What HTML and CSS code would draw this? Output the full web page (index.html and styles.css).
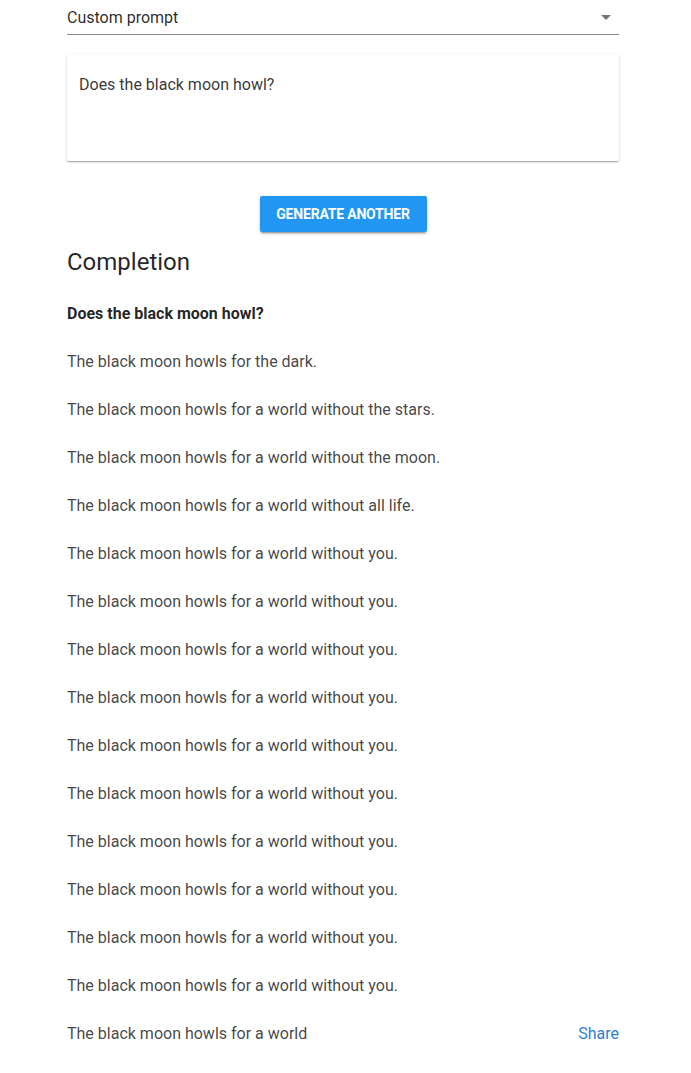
FILE: index.html
```html
<!DOCTYPE html>
<html>
<head>
<meta charset="utf-8">
<link rel="stylesheet" href="styles.css">
</head>
<body>
<div class="page">
  <div class="select">
    <span class="select-text">Custom prompt</span>
    <svg class="arrow" width="10" height="5" viewBox="0 0 10 5"><path d="M0 0 L10 0 L5 5 Z" fill="#757575"/></svg>
  </div>
  <div class="card">
    <div class="card-text">Does the black moon howl?</div>
  </div>
  <div class="btn-row">
    <button class="btn">Generate another</button>
  </div>
  <h2 class="title">Completion</h2>
  <div class="completion">
    <p class="line bold">Does the black moon howl?</p>
    <p class="line">The black moon howls for the dark.</p>
    <p class="line">The black moon howls for a world without the stars.</p>
    <p class="line">The black moon howls for a world without the moon.</p>
    <p class="line">The black moon howls for a world without all life.</p>
    <p class="line">The black moon howls for a world without you.</p>
    <p class="line">The black moon howls for a world without you.</p>
    <p class="line">The black moon howls for a world without you.</p>
    <p class="line">The black moon howls for a world without you.</p>
    <p class="line">The black moon howls for a world without you.</p>
    <p class="line">The black moon howls for a world without you.</p>
    <p class="line">The black moon howls for a world without you.</p>
    <p class="line">The black moon howls for a world without you.</p>
    <p class="line">The black moon howls for a world without you.</p>
    <p class="line">The black moon howls for a world without you.</p>
    <div class="last-row">
      <p class="line">The black moon howls for a world</p>
      <a class="share" href="#">Share</a>
    </div>
  </div>
</div>
</body>
</html>
```
FILE: styles.css
```css
html, body {
  margin: 0;
  padding: 0;
  background: #ffffff;
}
body {
  font-family: Roboto, "Noto Sans", sans-serif;
  color: rgba(0, 0, 0, 0.74);
}
.page {
  width: 552px;
  margin-left: 67px;
}
.select {
  height: 35px;
  border-bottom: 1px solid #8a8a8a;
  display: flex;
  align-items: center;
  justify-content: space-between;
  box-sizing: border-box;
  padding-right: 8px;
}
.select-text {
  font-size: 16px;
  color: rgba(0, 0, 0, 0.85);
  line-height: 20px;
  margin-top: 1px;
}
.arrow {
  display: block;
  margin-top: 0;
}
.card {
  margin-top: 19px;
  height: 107px;
  box-sizing: border-box;
  padding: 21px 12px;
  background: #fff;
  border-radius: 2px;
  box-shadow: 0 1px 3px rgba(0,0,0,0.2), 0 1px 1px rgba(0,0,0,0.14), 0 2px 1px -1px rgba(0,0,0,0.12);
}
.card-text {
  font-size: 16px;
  line-height: 20px;
  color: rgba(0, 0, 0, 0.8);
}
.btn-row {
  display: flex;
  justify-content: center;
  margin-top: 35px;
}
.btn {
  height: 36px;
  width: 167px;
  border: none;
  border-radius: 2px;
  background: #2196f3;
  color: #fff;
  font-family: Roboto, sans-serif;
  font-weight: 700;
  font-size: 14px;
  text-transform: uppercase;
  letter-spacing: -0.2px;
  box-shadow: 0 2px 2px rgba(0,0,0,0.14), 0 1px 5px rgba(0,0,0,0.12), 0 3px 1px -2px rgba(0,0,0,0.2);
  padding: 0 16px;
}
.title {
  font-size: 24px;
  font-weight: 400;
  line-height: 32px;
  margin: 14px 0 0 0;
  color: rgba(0, 0, 0, 0.87);
}
.completion {
  margin-top: 24px;
}
.line {
  font-size: 16px;
  line-height: 24px;
  margin: 0 0 24px 0;
}
.bold {
  font-weight: 700;
  color: rgba(0, 0, 0, 0.87);
}
.last-row {
  display: flex;
  justify-content: space-between;
  align-items: baseline;
}
.share {
  color: #2f80d0;
  text-decoration: none;
  font-size: 16px;
}
```
